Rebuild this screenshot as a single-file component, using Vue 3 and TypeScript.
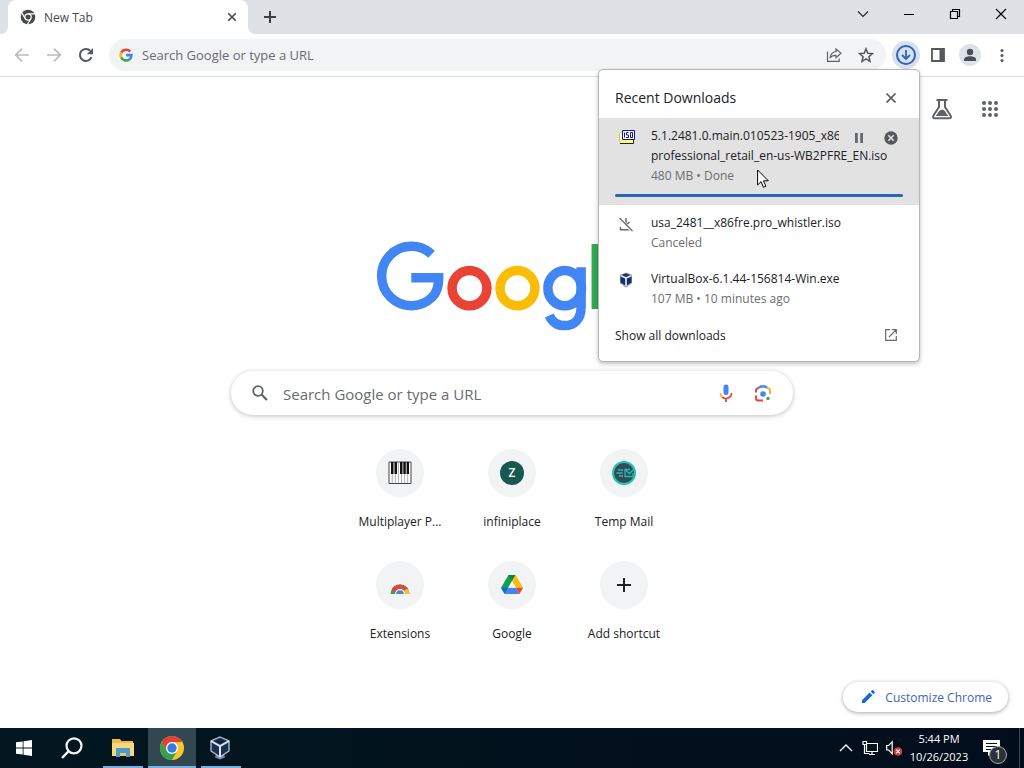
<script setup lang="ts">
import { ref } from 'vue'

interface Shortcut {
  id: string
  label: string
}

interface Download {
  id: string
  name: string
  status: string
}

const shortcuts: Shortcut[] = [
  { id: 'piano', label: 'Multiplayer P...' },
  { id: 'infiniplace', label: 'infiniplace' },
  { id: 'mail', label: 'Temp Mail' },
  { id: 'extensions', label: 'Extensions' },
  { id: 'drive', label: 'Google' },
]

const finished: Download[] = [
  { id: 'canceled', name: 'usa_2481__x86fre.pro_whistler.iso', status: 'Canceled' },
  { id: 'vbox', name: 'VirtualBox-6.1.44-156814-Win.exe', status: '107 MB • 10 minutes ago' },
]

const address = ref('')
const query = ref('')
const progress = ref(100)
const appDots = [3, 9, 15]
</script>

<template>
  <div class="desktop">
    <header class="tabstrip">
      <div class="tab">
        <svg class="i16" viewBox="0 0 16 16">
          <circle cx="8" cy="8" r="7.3" fill="#45494d" />
          <g fill="none" stroke="#fff" stroke-width="1.2">
            <circle cx="8" cy="8" r="3.2" />
            <path d="M8 4.800h7M5.200 9.600L1.700 3.600M10.800 9.600L7.300 15.600" />
          </g>
        </svg>
        <span class="tab-title">New Tab</span>
        <button class="icon-btn tab-close" aria-label="Close tab">
          <svg class="i16" viewBox="0 0 16 16"><path d="M4.200 4.200l7.600 7.600M11.800 4.200l-7.600 7.600" stroke="#45494d" stroke-width="1.600" /></svg>
        </button>
      </div>
      <button class="icon-btn new-tab" aria-label="New tab">
        <svg class="i16" viewBox="0 0 16 16"><path d="M8 2v12M2 8h12" stroke="#3c4043" stroke-width="2" /></svg>
      </button>
      <div class="window-controls">
        <button class="win-btn" aria-label="Search tabs">
          <svg class="i16" viewBox="0 0 16 16"><path d="M3 5.500l5 5 5-5" fill="none" stroke="#222" stroke-width="1.100" /></svg>
        </button>
        <button class="win-btn" aria-label="Minimize">
          <svg class="i16" viewBox="0 0 16 16"><path d="M3 8.500h10" stroke="#000" /></svg>
        </button>
        <button class="win-btn" aria-label="Restore">
          <svg class="i16" viewBox="0 0 16 16"><path d="M3.500 5.500h7v7h-7zM5.500 5.500v-2h7v7h-2" fill="none" stroke="#000" stroke-width="1.200" /></svg>
        </button>
        <button class="win-btn" aria-label="Close">
          <svg class="i16" viewBox="0 0 16 16"><path d="M3 3l10 10M13 3L3 13" stroke="#000" stroke-width="1.200" /></svg>
        </button>
      </div>
    </header>

    <div class="toolbar">
      <button class="icon-btn tool" aria-label="Back">
        <svg class="i16" viewBox="0 0 16 16"><path d="M15 8H2M8 1.700L1.700 8 8 14.300" fill="none" stroke="#babcbe" stroke-width="1.700" /></svg>
      </button>
      <button class="icon-btn tool" aria-label="Forward">
        <svg class="i16" viewBox="0 0 16 16"><path d="M1 8h13M8 1.700L14.300 8 8 14.300" fill="none" stroke="#babcbe" stroke-width="1.700" /></svg>
      </button>
      <button class="icon-btn tool" aria-label="Reload">
        <svg class="i16" viewBox="0 0 16 16">
          <path d="M13.500 10.200A6 6 0 1 1 12.300 3.800" fill="none" stroke="#55585c" stroke-width="2" />
          <path d="M15 1v6.200H8.800z" fill="#55585c" />
        </svg>
      </button>
      <div class="omnibox">
        <svg class="g-icon" viewBox="0 0 48 48">
          <g fill="none" stroke-width="9">
            <path d="M38.500 12.500A19 19 0 0 0 7.500 15.500" stroke="#ea4335" />
            <path d="M7.500 15.500a19 19 0 0 0 0 17" stroke="#fbbc05" />
            <path d="M7.500 32.500a19 19 0 0 0 29 6" stroke="#34a853" />
            <path d="M36.500 38.500A19 19 0 0 0 42.500 24.500H24" stroke="#4285f4" />
          </g>
        </svg>
        <input v-model="address" type="text" aria-label="Address and search bar" placeholder="Search Google or type a URL" />
        <button class="icon-btn omni-btn" aria-label="Share">
          <svg class="i16" viewBox="0 0 16 16">
            <path d="M1.500 4.500V14.300H13.200V11.500" fill="none" stroke="#5f6368" stroke-width="1.200" />
            <path d="M10 2l5 4.300-5 4.300V8.300C7.200 8.200 5.300 9 4 11c.4-3.500 2.500-5.900 6-6.500z" fill="none" stroke="#5f6368" stroke-width="1.200" />
          </svg>
        </button>
        <button class="icon-btn omni-btn" aria-label="Bookmark this tab">
          <svg class="i16" viewBox="0 0 16 16"><path d="M8 1.800l1.800 4.400 4.700.4-3.600 3.100 1.100 4.600L8 11.800l-4 2.500 1.100-4.600L1.500 6.600l4.700-.4z" fill="none" stroke="#55585c" stroke-width="1.500" /></svg>
        </button>
      </div>
      <div class="actions">
        <button class="icon-btn dl-btn" aria-label="Downloads">
          <svg class="dl-icon" viewBox="0 0 22 22">
            <circle cx="11" cy="11" r="9" fill="none" stroke="#2c62c0" stroke-width="2" />
            <path d="M11 6v9M7 11l4 4 4-4" fill="none" stroke="#2c62c0" stroke-width="1.800" />
          </svg>
        </button>
        <button class="icon-btn tool" aria-label="Side panel">
          <svg class="i16" viewBox="0 0 16 16"><path d="M2 2h12v12H2z" fill="none" stroke="#55585c" stroke-width="1.800" /><path d="M9.500 2H14v12H9.500z" fill="#55585c" /></svg>
        </button>
        <button class="icon-btn avatar" aria-label="Profile">
          <svg class="avatar-icon" viewBox="0 0 16 16"><circle cx="8" cy="5" r="3.200" fill="#4a4f55" /><path d="M2 14v-1.500C2 10.300 5 9.300 8 9.300s6 1 6 3.200V14z" fill="#4a4f55" /></svg>
        </button>
        <button class="icon-btn menu-btn" aria-label="Menu">
          <svg class="i16" viewBox="0 0 16 16" fill="#55585c"><circle cx="8" cy="3.500" r="1.500" /><circle cx="8" cy="8.500" r="1.500" /><circle cx="8" cy="13.500" r="1.500" /></svg>
        </button>
      </div>

      <section class="downloads" aria-label="Recent Downloads">
        <div class="dl-head">
          <h2>Recent Downloads</h2>
          <button class="icon-btn" aria-label="Close downloads">
            <svg class="i16" viewBox="0 0 16 16"><path d="M3.500 3.500l9 9M12.500 3.500l-9 9" stroke="#55585c" stroke-width="1.700" /></svg>
          </button>
        </div>
        <div class="dl-active">
          <div class="dl-row">
            <svg class="dl-file" viewBox="0 0 18 16">
              <path d="M1.500 4.500l2-1.500H6v10H2.500l-1-1z" fill="#ffffd8" stroke="#c8c832" />
              <path d="M3 11h12v3H3z" fill="#ffff80" />
              <path d="M2 14.500h13.500V11" fill="none" stroke="#222" />
              <path d="M4.500 1.500h12v9h-12z" fill="#fff" stroke="#1414a0" />
              <path d="M6.500 3.500v5M10.500 3.500H8.500v2.500h2v2.500H8M12.500 3.500h2v5h-2z" fill="none" stroke="#1414a0" />
            </svg>
            <div class="dl-text">
              <div class="dl-first">
                <span class="dl-name clipped">5.1.2481.0.main.010523-1905_x86</span>
                <button class="icon-btn" aria-label="Pause">
                  <svg class="i16" viewBox="0 0 16 16"><path d="M4 3h2.800v10H4zM9.200 3H12v10H9.200z" fill="#66696c" /></svg>
                </button>
                <button class="icon-btn" aria-label="Cancel">
                  <svg class="i16" viewBox="0 0 16 16"><circle cx="8" cy="8" r="6.700" fill="#55585c" /><path d="M5.300 5.300l5.400 5.400M10.700 5.300l-5.400 5.400" stroke="#e2e2e2" stroke-width="1.500" /></svg>
                </button>
              </div>
              <span class="dl-name">professional_retail_en-us-WB2PFRE_EN.iso</span>
              <span class="dl-status">480 MB • Done</span>
            </div>
          </div>
          <div class="bar" role="progressbar" aria-label="Download progress" :aria-valuenow="progress"><div class="bar-fill" :style="{ width: progress + '%' }"></div></div>
          <svg class="pointer" viewBox="0 0 12 20"><path d="M.6 1v15l3.500-3.400 2.300 5.700 2.500-1-2.400-5.500h4.800z" fill="#fff" stroke="#000" /></svg>
        </div>
        <div v-for="item in finished" :key="item.id" class="dl-row dl-finished">
          <svg v-if="item.id === 'canceled'" class="dl-file" viewBox="0 0 18 16">
            <path d="M8 2v6M4.500 6L8 9.300 11.500 6M2.500 11v2.800H13" fill="none" stroke="#66696c" stroke-width="1.400" />
            <path d="M1.500 2.500L14 15" stroke="#fff" stroke-width="3" />
            <path d="M1.500 2L14.500 15" stroke="#66696c" stroke-width="1.300" />
          </svg>
          <svg v-else class="dl-file" viewBox="0 0 18 16">
            <path d="M8 .5l6 2.200v8.600L8 15.700l-6-4.400V2.700z" fill="#9aa6b8" />
            <path d="M8 1.200l5 2-5 2.200-5-2.200z" fill="#243b68" />
            <path d="M2.500 4.500l4.700 2.300v6.500L2.500 10.500zM13.500 4.500L8.800 6.800v6.500l4.700-2.800z" fill="#162e61" />
            <path d="M8 14V6L3 3.700M8 6l5-2.300" fill="none" stroke="#e8edf4" stroke-width="1.300" />
          </svg>
          <div class="dl-text">
            <span class="dl-name">{{ item.name }}</span>
            <span class="dl-status">{{ item.status }}</span>
          </div>
        </div>
        <a class="show-all" href="#downloads">
          <span>Show all downloads</span>
          <svg class="i16" viewBox="0 0 16 16"><path d="M7 2.700H2.700v10.600h10.600V9M9 2.700h4.300V7M13.300 2.700L6 10" fill="none" stroke="#66696c" stroke-width="1.200" /></svg>
        </a>
      </section>
    </div>

    <main class="page">
      <nav class="page-nav">
        <button class="icon-btn labs" aria-label="Search Labs">
          <svg viewBox="0 0 24 24">
            <path d="M6.500 3h11M9 3v7L3.500 18.500Q2 21.300 5 21.300h14q3 0 1.500-2.800L15 10V3" fill="none" stroke="#5f6368" stroke-width="2" />
            <path d="M5.800 19l3.400-5q2.800-2.600 5.600 0l3.400 5z" fill="#5f6368" />
          </svg>
        </button>
        <button class="icon-btn apps" aria-label="Google apps">
          <svg viewBox="0 0 18 18" fill="#5f6368">
            <template v-for="y in appDots" :key="y">
              <circle v-for="x in appDots" :key="x" :cx="x" :cy="y" r="2" />
            </template>
          </svg>
        </button>
      </nav>

      <svg class="logo" viewBox="0 0 272 92" fill="none" stroke-width="9.500" role="img" aria-label="Google">
        <path d="M55.600 13.300A29.700 29.700 0 1 0 56.300 56C60.800 51.500 62.700 45.500 62.700 36.700H35.300" stroke="#4285f4" />
        <ellipse cx="93.500" cy="47.200" rx="17.400" ry="17.600" stroke="#ea4335" />
        <ellipse cx="141.500" cy="47.200" rx="17.400" ry="17.600" stroke="#fbbc05" />
        <ellipse cx="188.700" cy="47.200" rx="16.800" ry="17.600" stroke="#4285f4" />
        <path d="M205.100 26.300V66C205.100 78 198.500 84.600 188.700 84.600 181 84.600 176 80.500 173.200 74.400" stroke="#4285f4" />
        <path d="M220.300 3v65" stroke="#34a853" />
        <path d="M235 51.500L264.500 39.500C261 32.500 256 29.700 250 29.700A17.500 17.500 0 1 0 265.700 57" stroke="#ea4335" />
      </svg>

      <div class="search">
        <svg class="search-icon" viewBox="0 0 18 18"><circle cx="7" cy="7" r="4.800" fill="none" stroke="#5f6368" stroke-width="1.800" /><path d="M10.500 10.500L16 16" stroke="#5f6368" stroke-width="2.200" /></svg>
        <input v-model="query" type="text" aria-label="Search" placeholder="Search Google or type a URL" />
        <button class="icon-btn" aria-label="Search by voice">
          <svg class="i20" viewBox="0 0 20 20">
            <rect x="7.500" y="1.500" width="5" height="10.500" rx="2.500" fill="#4285f4" />
            <path d="M4.500 10q0 2.500 1.600 4" fill="none" stroke="#fbbc05" stroke-width="1.700" />
            <path d="M6.100 14Q10 17 13.900 14 15.500 12.500 15.500 10" fill="none" stroke="#ea4335" stroke-width="1.700" />
            <path d="M10 15.500v3.500" stroke="#b34b35" stroke-width="1.700" />
          </svg>
        </button>
        <button class="icon-btn lens" aria-label="Search by image">
          <svg class="i20" viewBox="0 0 20 20" fill="none" stroke-width="2">
            <circle cx="10" cy="11" r="2.800" fill="#4285f4" />
            <path d="M6 4.800L8 3.500h4l2 1.300" stroke="#4285f4" stroke-width="2.500" />
            <path d="M3 9.500V7.500Q3 5 6 5" stroke="#d94c68" />
            <path d="M14 5q3 0 3 2.500V11" stroke="#f0b429" />
            <path d="M3 12.500v2.500Q3 17.500 5.500 17.500H10" stroke="#ea4335" />
            <circle cx="15" cy="15.500" r="1.700" fill="#34a853" />
          </svg>
        </button>
      </div>

      <div class="shortcuts">
        <a v-for="item in shortcuts" :key="item.id" class="tile" href="#">
          <span class="tile-icon">
            <svg v-if="item.id === 'piano'" viewBox="0 0 24 24">
              <path d="M1 1h22v21.500H1z" fill="#fff" stroke="#444" />
              <path d="M4.200 13v9M7.300 13v9M10.400 1v21M13.500 13v9M16.600 13v9M19.700 1v21" stroke="#999" stroke-width=".8" />
              <path d="M3 1h2.500v12H3zM6.500 1H9v12H6.500zM12 1h2.500v12H12zM15.300 1h2.500v12h-2.500zM18.600 1H21v12h-2.400z" fill="#111" />
            </svg>
            <span v-else-if="item.id === 'infiniplace'" class="letter">Z</span>
            <svg v-else-if="item.id === 'mail'" viewBox="0 0 24 24">
              <circle cx="12" cy="12" r="11" fill="#364958" stroke="#20c5ae" stroke-width="2" />
              <path d="M6 9h5M4.500 12h6M7 15h4M18 8.500h-5v7h8V12M14 9.500l3.500 3 4-4" fill="none" stroke="#20bfaa" stroke-width="1.300" />
            </svg>
            <svg v-else-if="item.id === 'extensions'" viewBox="0 0 24 24">
              <path d="M2.500 21a9.500 9.500 0 0 1 19 0z" fill="#34a05a" />
              <path d="M12 21h9.500a9.500 9.500 0 0 0-2-5.700z" fill="#fbbf2d" />
              <path d="M3.800 16.200a9.500 9.500 0 0 1 16.400 0H12L7.500 21z" fill="#dc4a3d" />
              <path d="M7 21a5 5 0 0 1 10 0z" fill="#f1f3f4" />
              <path d="M8.200 21a3.800 3.800 0 0 1 7.600 0z" fill="#4a83d8" />
            </svg>
            <svg v-else viewBox="0 0 24 24">
              <path d="M8.500 2h7L12 8 5.500 21 1 14.800z" fill="#0ba350" />
              <path d="M8.500 2h7L12 8z" fill="#16813b" />
              <path d="M15.500 2L23 14.800h-7L12 8z" fill="#fcbb05" />
              <path d="M1 14.800h7L4.500 21z" fill="#1967d2" />
              <path d="M8 14.800h8l3.500 6.200h-15z" fill="#4384f3" />
              <path d="M16 14.800h7L19.500 21z" fill="#e94436" />
              <path d="M12 8l4 6.800H8z" fill="#f1f3f4" />
            </svg>
          </span>
          <span class="tile-label">{{ item.label }}</span>
        </a>
        <button class="tile">
          <span class="tile-icon"><svg viewBox="0 0 24 24"><path d="M12 5v14M5 12h14" stroke="#202124" stroke-width="2" /></svg></span>
          <span class="tile-label">Add shortcut</span>
        </button>
      </div>

      <button class="customize">
        <svg class="i16" viewBox="0 0 16 16"><path d="M1 11.300L8.700 3.600l2.700 2.700L3.700 14H1zM9.700 2.600L11 1.300q.7-.5 1.300 0l1.400 1.400q.5.600 0 1.300l-1.300 1.300z" fill="#1a66d6" /></svg>
        <span>Customize Chrome</span>
      </button>
    </main>

    <footer class="taskbar">
      <button class="task" aria-label="Start">
        <svg class="i16" viewBox="0 0 16 16"><path d="M0 2.300L6.700 1.400v6.200H0zM7.500 1.300L16 0v7.600H7.500zM0 8.400h6.700v6.200L0 13.700zM7.500 8.400H16V16l-8.500-1.300z" fill="#fff" /></svg>
      </button>
      <button class="task task-search" aria-label="Search">
        <svg viewBox="0 0 22 22"><circle cx="13" cy="8.800" r="7.500" fill="none" stroke="#f2f6f8" stroke-width="2.200" /><path d="M7.700 14.100L1 21" stroke="#f2f6f8" stroke-width="2.400" /></svg>
      </button>
      <button class="task running" aria-label="File Explorer">
        <svg viewBox="0 0 24 24">
          <path d="M1 3h8l1.500 2H22v15H1z" fill="#eebb4d" />
          <path d="M1 7h22v13H1z" fill="#fad77a" />
          <path d="M5 12h14v9h-4v-4H9v4H5z" fill="#4b9bce" />
          <path d="M9 17h6v3H9z" fill="#edc85f" />
        </svg>
      </button>
      <button class="task running current" aria-label="Google Chrome">
        <svg viewBox="0 0 24 24">
          <circle cx="12" cy="12" r="12" fill="#fbc52d" />
          <path d="M1.600 6A12 12 0 0 1 22.400 6H12L6.800 15z" fill="#de4235" />
          <path d="M1.600 6A12 12 0 0 0 12 24L17.200 15 12 18 6.800 15z" fill="#33a150" />
          <circle cx="12" cy="12" r="6" fill="#fff" />
          <circle cx="12" cy="12" r="4.700" fill="#327be4" />
        </svg>
      </button>
      <button class="task running" aria-label="VirtualBox">
        <svg viewBox="0 0 24 24">
          <path d="M7 18l-1 3.500 5 2 5-2-1-3.500" fill="#758aa4" />
          <path d="M11 1l9 4v10l-9 6-9-6V5z" fill="#1b3152" stroke="#b5c5d6" stroke-width="1.300" />
          <path d="M2 5l9 5 9-5M11 10v11" fill="none" stroke="#dde6ee" stroke-width="2" />
          <path d="M11 3.500l4.500 2L11 7.800 6.500 5.500z" fill="#102342" />
        </svg>
      </button>

      <div class="tray">
        <button class="tray-btn" aria-label="Show hidden icons">
          <svg class="i16" viewBox="0 0 16 16"><path d="M2 11l6-6 6 6" fill="none" stroke="#fff" stroke-width="1.400" /></svg>
        </button>
        <button class="tray-btn" aria-label="Network">
          <svg class="i16" viewBox="0 0 16 16"><path d="M4.500 3.500h11v8h-11zM1 1.500h3.500v3H1zM2.500 4.500v9h5M10 11.500v3M7 14.500h6" fill="none" stroke="#fff" stroke-width="1.200" /></svg>
        </button>
        <button class="tray-btn" aria-label="Volume muted">
          <svg class="i16" viewBox="0 0 16 16"><path d="M.7 5.500h2l3.500-3.700v12L2.700 10h-2z" fill="none" stroke="#fff" stroke-width="1.200" /><circle cx="12" cy="11.500" r="4.300" fill="#d13a40" /><path d="M10.200 9.700l3.600 3.600M13.800 9.700l-3.600 3.600" stroke="#fff" stroke-width="1.200" /></svg>
        </button>
        <div class="clock"><span>5:44 PM</span><span>10/26/2023</span></div>
        <button class="notify" aria-label="Notifications, 1 new">
          <svg viewBox="0 0 18 18"><path d="M0 1h17v12H9l-4 4v-4H0z" fill="#fff" /><path d="M3 4.500h11M3 7.500h11M3 10.500h6" stroke="#0a1420" /></svg>
          <span class="badge">1</span>
        </button>
      </div>
    </footer>
  </div>
</template>

<style>
body {
  margin: 0;
}
</style>

<style scoped>
.desktop {
  display: flex;
  flex-direction: column;
  min-height: 100vh;
  background: #fff;
  color: #202124;
  font-family: "Open Sans", "Noto Sans", sans-serif;
  font-size: 12px;
}
.desktop * {
  box-sizing: border-box;
}
button,
input {
  padding: 0;
  border: 0;
  background: none;
  color: inherit;
  font: inherit;
}
a {
  color: inherit;
  text-decoration: none;
}
svg {
  display: block;
  flex: none;
}
.i16 {
  width: 16px;
  height: 16px;
}
.i20 {
  width: 20px;
  height: 20px;
}
.icon-btn {
  display: flex;
  flex: none;
  align-items: center;
  justify-content: center;
}

.tabstrip {
  display: flex;
  align-items: center;
  height: 34px;
  padding-left: 8px;
  background: #dee1e6;
}
.tab {
  position: relative;
  display: flex;
  align-items: center;
  gap: 8px;
  width: 240px;
  height: 34px;
  padding: 0 8px 0 12px;
  border-radius: 8px 8px 0 0;
  background: #fff;
}
.tab::before,
.tab::after {
  position: absolute;
  bottom: 0;
  width: 8px;
  height: 8px;
  content: "";
}
.tab::before {
  right: 100%;
  background: radial-gradient(circle at 0 0, transparent 8px, #fff 8px);
}
.tab::after {
  left: 100%;
  background: radial-gradient(circle at 100% 0, transparent 8px, #fff 8px);
}
.tab-title {
  flex: 1;
  color: #45494d;
}
.new-tab {
  width: 28px;
  margin-left: 8px;
}
.window-controls {
  display: flex;
  align-self: flex-start;
  margin-left: auto;
}
.win-btn {
  display: flex;
  align-items: center;
  justify-content: center;
  width: 46px;
  height: 28px;
}

.toolbar {
  position: relative;
  z-index: 2;
  display: flex;
  align-items: center;
  height: 43px;
  padding-left: 6px;
  border-bottom: 1px solid #dcdfe2;
}
.tool {
  width: 32px;
  height: 32px;
}
.omnibox {
  display: flex;
  flex: 1;
  align-items: center;
  height: 32px;
  margin-left: 7px;
  padding: 0 4px 0 10px;
  border-radius: 16px;
  background: #f1f3f4;
}
.g-icon {
  width: 14px;
  height: 14px;
}
.omnibox input {
  flex: 1;
  min-width: 0;
  margin-left: 9px;
  outline: 0;
  font-size: 13px;
}
input::placeholder {
  color: #686c70;
  opacity: 1;
}
.omni-btn {
  width: 32px;
  height: 32px;
}
.actions {
  display: flex;
  align-items: center;
  margin-right: 6px;
  margin-left: 6px;
}
.dl-btn {
  width: 28px;
  height: 28px;
  margin-right: 2px;
  border-radius: 50%;
  background: #d9e1ec;
}
.dl-icon {
  width: 22px;
  height: 22px;
}
.avatar {
  width: 22px;
  height: 22px;
  margin: 0 5px;
  border-radius: 50%;
  background: #dee2e8;
}
.avatar-icon {
  width: 16px;
  height: 16px;
}
.menu-btn {
  width: 32px;
  height: 32px;
}

.downloads {
  position: absolute;
  top: 35px;
  right: 104px;
  width: 322px;
  border: 1px solid #b4b6b8;
  border-radius: 5px;
  background: #fff;
  box-shadow: 0 2px 4px rgba(0, 0, 0, 0.25);
}
.dl-head {
  display: flex;
  align-items: center;
  justify-content: space-between;
  height: 48px;
  padding: 7px 20px 0 16px;
}
.dl-head h2 {
  margin: 0;
  font-size: 14px;
  font-weight: 400;
}
.dl-active {
  position: relative;
  height: 87px;
  padding: 8px 16px 0;
  background: #e2e2e2;
}
.dl-row {
  display: flex;
  align-items: flex-start;
  gap: 15px;
}
.dl-file {
  width: 18px;
  height: 16px;
  margin-top: 3px;
  margin-left: 3px;
}
.dl-text {
  display: flex;
  flex: 1;
  flex-direction: column;
  min-width: 0;
}
.dl-first {
  display: flex;
  align-items: center;
  gap: 16px;
  height: 20px;
  padding-right: 4px;
}
.dl-first .icon-btn {
  padding-top: 3px;
}
.dl-name {
  line-height: 20px;
  white-space: nowrap;
}
.clipped {
  flex: 1;
  min-width: 0;
  margin-right: -4px;
  overflow: hidden;
}
.dl-status {
  line-height: 19px;
  color: #6b6e72;
}
.bar {
  height: 3px;
  margin-top: 9px;
  border-radius: 2px;
  background: #cfd8e8;
}
.bar-fill {
  height: 3px;
  border-radius: 2px;
  background: #2a64bd;
}
.pointer {
  position: absolute;
  top: 51px;
  left: 158px;
  width: 12px;
  height: 20px;
}
.dl-finished {
  height: 56px;
  padding: 8px 16px;
}
.show-all {
  display: flex;
  align-items: center;
  justify-content: space-between;
  height: 44px;
  padding: 0 20px 8px 16px;
}

.page {
  position: relative;
  display: flex;
  flex: 1;
  flex-direction: column;
  align-items: center;
}
.page-nav {
  display: flex;
  gap: 27px;
  align-items: center;
  align-self: flex-end;
  height: 64px;
  padding-right: 25px;
}
.labs svg {
  width: 24px;
  height: 24px;
}
.apps svg {
  width: 18px;
  height: 18px;
}
.logo {
  width: 272px;
  height: 92px;
  margin-top: 100px;
}
.search {
  display: flex;
  align-items: center;
  width: 562px;
  max-width: 90%;
  height: 44px;
  margin-top: 38px;
  padding: 0 20px;
  border-radius: 22px;
  background: #fff;
  box-shadow: 0 1px 5px rgba(32, 33, 36, 0.28);
}
.search-icon {
  width: 18px;
  height: 18px;
}
.search input {
  flex: 1;
  min-width: 0;
  margin-left: 14px;
  padding-top: 2px;
  outline: 0;
  font-size: 15px;
}
.lens {
  margin-left: 17px;
}
.shortcuts {
  display: grid;
  grid-template-columns: repeat(3, 112px);
  margin-top: 34px;
}
.tile {
  display: flex;
  flex-direction: column;
  align-items: center;
  height: 112px;
}
.tile-icon {
  display: flex;
  align-items: center;
  justify-content: center;
  width: 48px;
  height: 48px;
  border-radius: 50%;
  background: #f1f3f4;
}
.tile-icon svg {
  width: 24px;
  height: 24px;
}
.letter {
  width: 24px;
  border-radius: 50%;
  background: #17594e;
  color: #fff;
  font-weight: 600;
  line-height: 24px;
  text-align: center;
}
.tile-label {
  margin-top: 15px;
  line-height: 20px;
  white-space: nowrap;
}
.customize {
  position: absolute;
  right: 16px;
  bottom: 16px;
  display: flex;
  gap: 8px;
  align-items: center;
  height: 30px;
  padding: 0 16px 0 18px;
  border-radius: 15px;
  background: #fff;
  color: #3f65b4;
  box-shadow: 0 1px 4px rgba(0, 0, 0, 0.35);
}

.taskbar {
  display: flex;
  height: 40px;
  background: linear-gradient(90deg, #021720, #020d1b);
  color: #fff;
}
.task {
  position: relative;
  display: flex;
  align-items: center;
  justify-content: center;
  width: 48px;
  height: 40px;
  margin-right: 1px;
}
.task:first-child {
  margin-right: 0;
}
.task-search {
  margin-right: 3px;
}
.task svg:not(.i16) {
  width: 24px;
  height: 24px;
}
.task.task-search svg {
  width: 22px;
  height: 22px;
}
.running::after {
  position: absolute;
  right: 4px;
  bottom: 0;
  left: 4px;
  height: 2px;
  background: #76b0e0;
  content: "";
}
.current {
  background: #324850;
}
.current::after {
  right: 0;
  left: 0;
}
.tray {
  display: flex;
  align-items: center;
  margin-left: auto;
  padding-right: 4px;
}
.tray-btn {
  display: flex;
  align-items: center;
  justify-content: center;
  width: 24px;
  height: 40px;
}
.clock {
  display: flex;
  flex-direction: column;
  width: 66px;
  font-size: 11px;
  line-height: 18px;
  text-align: center;
}
.notify {
  position: relative;
  display: flex;
  align-items: center;
  width: 48px;
  height: 40px;
  padding-left: 11px;
  border-right: 1px solid #3b4650;
}
.notify svg {
  width: 18px;
  height: 18px;
}
.badge {
  position: absolute;
  right: 12px;
  bottom: 4px;
  width: 18px;
  border: 1px solid #aaa;
  border-radius: 50%;
  background: #2a323a;
  line-height: 16px;
  text-align: center;
}
</style>
